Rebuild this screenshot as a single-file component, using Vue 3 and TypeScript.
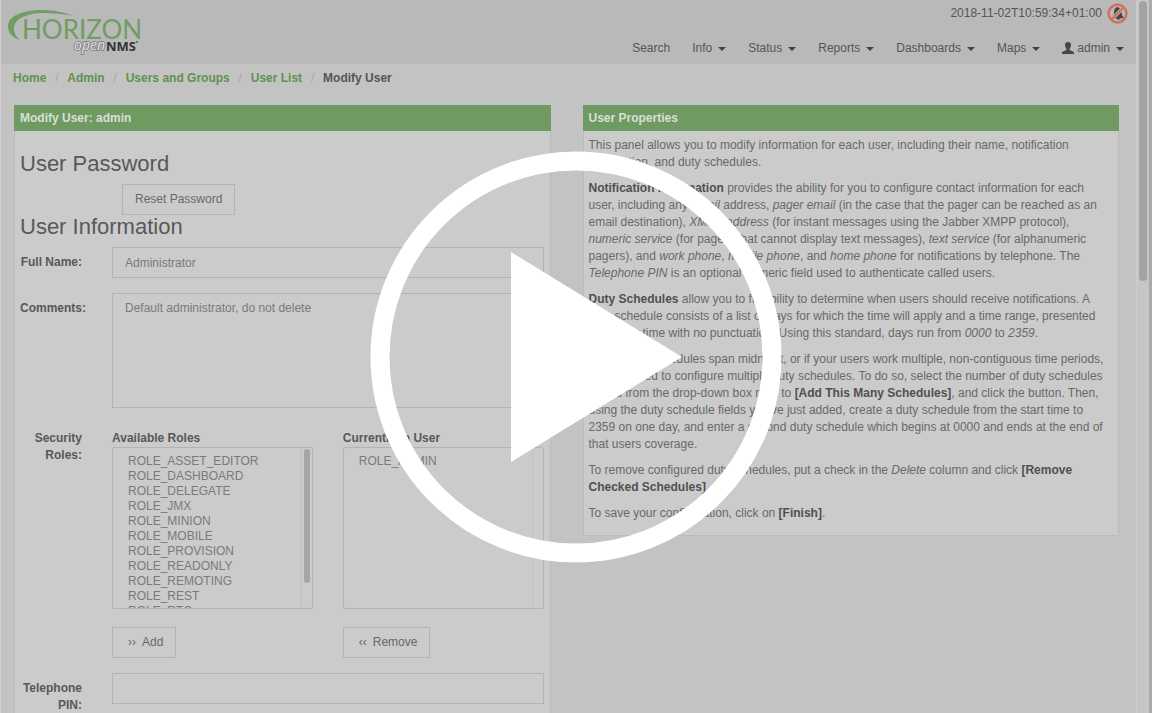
<script setup lang="ts">
import { ref } from 'vue'

interface NavItem { label: string; caret: boolean; user?: boolean }

const navItems: NavItem[] = [
  { label: 'Search', caret: false },
  { label: 'Info', caret: true },
  { label: 'Status', caret: true },
  { label: 'Reports', caret: true },
  { label: 'Dashboards', caret: true },
  { label: 'Maps', caret: true },
  { label: 'admin', caret: true, user: true },
]
const crumbs: string[] = ['Home', 'Admin', 'Users and Groups', 'User List']
const availableRoles: string[] = [
  'ROLE_ASSET_EDITOR', 'ROLE_DASHBOARD', 'ROLE_DELEGATE', 'ROLE_JMX', 'ROLE_MINION',
  'ROLE_MOBILE', 'ROLE_PROVISION', 'ROLE_READONLY', 'ROLE_REMOTING', 'ROLE_REST',
  'ROLE_RTC', 'ROLE_USER',
]
const currentRoles: string[] = ['ROLE_ADMIN']

const fullName = ref('Administrator')
const comments = ref('Default administrator, do not delete')
const pin = ref('')
</script>

<template>
  <div class="screen">
    <div class="page">
      <header class="header">
        <a class="logo" href="#" aria-label="Horizon OpenNMS">
          <svg width="136" height="50" viewBox="0 0 136 50">
            <path d="M12 30C3 27 0 22 0 16C0 6 15 0 34 0C47 0 58 3 66 6C56 4 46 3 37 3C18 3 6 9 6 19C6 23 8 27 12 30Z" fill="#6f9d62" />
            <text x="14" y="29" class="logo-main">HORIZON</text>
            <text x="66" y="40" class="logo-open logo-halo">open</text>
            <text x="66" y="40" class="logo-open">open</text>
            <text x="98" y="41" class="logo-nms">NMS</text>
            <circle cx="129" cy="32" r="1" fill="#555" />
          </svg>
        </a>
        <div class="header-right">
          <div class="status">
            <time>2018-11-02T10:59:34+01:00</time>
            <svg width="21" height="21" viewBox="0 0 21 21" aria-hidden="true">
              <path d="M9 4.500L11 4L13 5.500C15 7 14.500 10 15 12L17 15L13 15.500L12 17L10 16L5 14L7 11C7 8 7 6 9 4.500Z" fill="#474747" />
              <path d="M4 17L17 4" stroke="#bdbdbd" stroke-width="3.600" />
              <path d="M4 17L17 4" stroke="#cf755b" stroke-width="2.400" />
              <circle cx="10.500" cy="10.500" r="8.900" fill="none" stroke="#cf755b" stroke-width="2.600" />
            </svg>
          </div>
          <nav class="nav">
            <a v-for="item in navItems" :key="item.label" href="#">
              <svg v-if="item.user" class="person" width="12" height="12" viewBox="0 0 12 12" aria-hidden="true">
                <path d="M6 0C8.200 0 9.200 1.500 9 3.500C8.800 5.200 8.200 6 7.600 6.800V8L11 9.400C11.800 9.800 12 10.500 12 12H0C0 10.500 .2 9.800 1 9.400L4.400 8V6.800C3.800 6 3.200 5.200 3 3.500C2.800 1.500 3.800 0 6 0Z" fill="#474747" />
              </svg>{{ item.label }}<span v-if="item.caret" class="caret"></span>
            </a>
          </nav>
        </div>
      </header>

      <nav class="breadcrumb" aria-label="Breadcrumb">
        <template v-for="c in crumbs" :key="c"><a href="#">{{ c }}</a><span class="sep">/</span></template>
        <span>Modify User</span>
      </nav>

      <main class="columns">
        <section class="panel">
          <h3 class="panel-title">Modify User: admin</h3>
          <form class="form" @submit.prevent>
            <h2>User Password</h2>
            <button type="button" class="btn reset">Reset Password</button>
            <h2>User Information</h2>
            <div class="row">
              <label for="full-name">Full Name:</label>
              <input id="full-name" v-model="fullName" type="text" class="control" />
            </div>
            <div class="row">
              <label for="comments">Comments:</label>
              <textarea id="comments" v-model="comments" class="control area"></textarea>
            </div>
            <div class="row">
              <span class="row-label">Security Roles:</span>
              <div class="roles">
                <div class="role-column">
                  <label for="available">Available Roles</label>
                  <div class="list-wrap">
                    <select id="available" multiple class="list">
                      <option v-for="r in availableRoles" :key="r">{{ r }}</option>
                    </select>
                    <span class="list-track"><span class="list-thumb"></span></span>
                  </div>
                  <button type="button" class="btn move"><span class="chev">››</span>Add</button>
                </div>
                <div class="role-column">
                  <label for="current">Currently in User</label>
                  <div class="list-wrap">
                    <select id="current" multiple class="list">
                      <option v-for="r in currentRoles" :key="r">{{ r }}</option>
                    </select>
                    <span class="list-track"></span>
                  </div>
                  <button type="button" class="btn move"><span class="chev">‹‹</span>Remove</button>
                </div>
              </div>
            </div>
            <div class="row">
              <label for="pin">Telephone PIN:</label>
              <input id="pin" v-model="pin" type="text" class="control" />
            </div>
          </form>
        </section>

        <section class="panel info">
          <h3 class="panel-title">User Properties</h3>
          <div class="prose">
            <p>This panel allows you to modify information for each user, including their name, notification information, and duty schedules.</p>
            <p><b>Notification Information</b> provides the ability for you to configure contact information for each user, including any <i>email</i> address, <i>pager email</i> (in the case that the pager can be reached as an email destination), <i>XMPP address</i> (for instant messages using the Jabber XMPP protocol), <i>numeric service</i> (for pagers that cannot display text messages), <i>text service</i> (for alphanumeric pagers), and <i>work phone</i>, <i>mobile phone</i>, and <i>home phone</i> for notifications by telephone. The <i>Telephone PIN</i> is an optional numeric field used to authenticate called users.</p>
            <p><b>Duty Schedules</b> allow you to flexibility to determine when users should receive notifications. A duty schedule consists of a list of days for which the time will apply and a time range, presented in military time with no punctuation. Using this standard, days run from <i>0000</i> to <i>2359</i>.</p>
            <p>If your duty schedules span midnight, or if your users work multiple, non-contiguous time periods, you will need to configure multiple duty schedules. To do so, select the number of duty schedules to add from the drop-down box next to <b>[Add This Many Schedules]</b>, and click the button. Then, using the duty schedule fields you've just added, create a duty schedule from the start time to 2359 on one day, and enter a second duty schedule which begins at 0000 and ends at the end of that users coverage.</p>
            <p>To remove configured duty schedules, put a check in the <i>Delete</i> column and click <b>[Remove Checked Schedules]</b>.</p>
            <p>To save your configuration, click on <b>[Finish]</b>.</p>
          </div>
        </section>
      </main>
    </div>
    <div class="scrollbar" aria-hidden="true"><span class="thumb"></span></div>
    <button type="button" class="play" aria-label="Play video">
      <svg width="412" height="412" viewBox="0 0 412 412" aria-hidden="true">
        <circle cx="206" cy="206" r="196" fill="none" stroke="#fff" stroke-width="19" />
        <path d="M141 101L312 206L141 311Z" fill="#fff" />
      </svg>
    </button>
  </div>
</template>

<style>
body { margin: 0; background: #c3c3c3; }
</style>

<style scoped>
* { box-sizing: border-box; }
.screen {
  position: relative;
  display: flex;
  height: 100vh;
  overflow: hidden;
  background: #c3c3c3;
  color: #696969;
  font: 12px/17px "Liberation Sans", Arial, sans-serif;
}
.page { flex: 1; min-width: 0; border-left: 1px solid #cfcfcf; }
a { color: inherit; text-decoration: none; }
.header {
  display: flex;
  justify-content: space-between;
  height: 64px;
  padding: 2px 8px 0 7px;
  background: #b9b9b9;
  color: #555;
}
.logo { padding-top: 8px; }
.logo svg { display: block; overflow: visible; }
.logo-main { font: 26px Lato, sans-serif; fill: #6f9d62; }
.logo-open { font: italic 14px "Open Sans", sans-serif; fill: #e0e0e0; }
.logo-halo { stroke: #858585; stroke-width: 2px; }
.logo-nms { font: bold 13px "Open Sans", sans-serif; fill: #333; }
.header-right { display: flex; flex-direction: column; gap: 16px; align-items: flex-end; }
.status { display: flex; align-items: center; gap: 5px; height: 22px; }
.status svg { display: block; }
.nav { display: flex; gap: 22px; padding-right: 4px; }
.nav a { display: flex; align-items: center; }
.person { margin: 0 3px 2px 0; }
.caret {
  margin-left: 6px;
  border: 4px solid transparent;
  border-top-color: #444;
  border-bottom: 0;
}
.breadcrumb { display: flex; padding: 6px 12px 0; font-weight: bold; color: #555; }
.breadcrumb a { color: #609152; }
.sep { width: 21px; text-align: center; font-weight: normal; color: #a9a9a9; }
.columns { display: grid; grid-template-columns: 1fr 1fr; gap: 32px; align-items: start; padding: 18px 17px 0 13px; }
.panel { border: 1px solid #bbb; background: #cbcbcb; }
.panel-title {
  margin: -1px -1px 0;
  padding: 5px 6px 4px;
  background: #6f9b62;
  color: #d8dfd6;
  font-size: 12px;
  line-height: 17px;
}
.form { padding: 18px 6px 20px 5px; }
h2 { margin: 0; font-size: 22px; line-height: 30px; font-weight: normal; color: #585858; }
.btn {
  height: 31px;
  padding: 0 12px;
  border: 1px solid #b3b3b3;
  background: transparent;
  color: #696969;
  font: inherit;
}
.reset { display: block; margin: 5px 0 -3px 102px; }
.row { display: flex; margin-top: 15px; }
.row > label, .row-label { width: 62px; margin-right: 30px; padding-top: 7px; text-align: right; }
.row label, .row-label { flex: none; font-weight: bold; color: #585858; }
.row:nth-of-type(1) { margin-top: 5px; }
.control {
  flex: 1;
  min-width: 0;
  height: 31px;
  padding: 6px 12px;
  border: 1px solid #b3b3b3;
  background: transparent;
  color: #7a7a7a;
  font: inherit;
  outline: 0;
}
.area { display: block; height: 115px; resize: none; }
.roles { display: flex; flex: 1; gap: 30px; min-width: 0; padding-top: 7px; }
.role-column { flex: 1; min-width: 0; }
.role-column label { display: block; }
.list-wrap { position: relative; }
.list {
  display: block;
  width: 100%;
  height: 162px;
  padding: 6px 13px;
  overflow: hidden;
  border: 1px solid #b3b3b3;
  background: transparent;
  color: #7a7a7a;
  font: inherit;
  outline: 0;
}
.list option { min-height: 15px; padding: 0 2px; line-height: 15px; }
.list-track { position: absolute; top: 1px; right: 1px; bottom: 1px; width: 11px; border-left: 1px solid #c0c0c0; }
.list-thumb { display: block; width: 6px; height: 134px; margin: 1px 2px; border-radius: 3px; background: #a6a6a6; }
.move { margin-top: 18px; }
.chev { margin: 0 6px 0 3px; }
.prose { padding: 6px 12px 4px 5px; }
p { margin: 0 0 9px; }
b { color: #505050; }
.scrollbar { flex: none; width: 16px; padding: 1px 2px; border-left: 1px solid #cdcdcd; border-right: 3px solid #aaa; background: #c6c6c6; }
.thumb { display: block; width: 8px; height: 280px; border-radius: 4px; background: #a3a3a3; }
.play {
  position: absolute;
  inset: 0;
  display: flex;
  align-items: center;
  justify-content: center;
  width: 100%;
  border: 0;
  padding: 0;
  background: transparent;
}
</style>
